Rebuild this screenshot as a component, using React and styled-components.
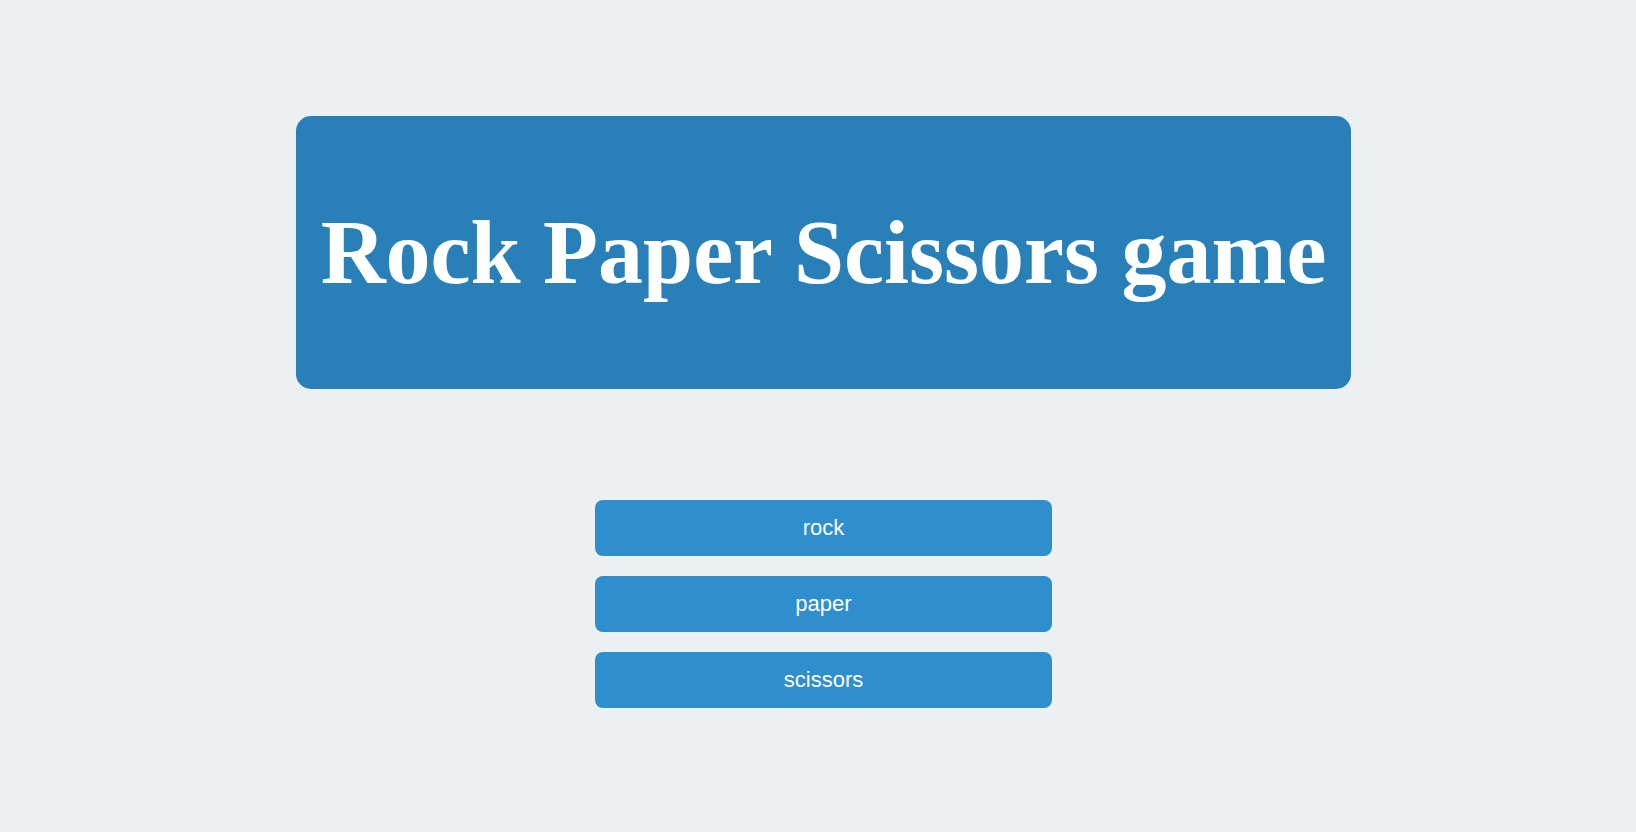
import styled, { createGlobalStyle } from "styled-components";

const GlobalStyle = createGlobalStyle`
body {
    margin: 0;
    background: #ecf0f1;
    font-family: 'Liberation Sans', Arial, sans-serif;
}
`;

const Container = styled.div`
min-height: 100vh;
box-sizing: border-box;
padding-top: 116px;
padding-left: 11px;
display: flex;
flex-direction: column;
align-items: center;
`;

const Topo = styled.div`
width: 1055px;
height: 273px;
background: #2980b9;
border-radius: 15px;
display: flex;
justify-content: center;
align-items: center;

h1 {
    margin: 0;
    font-family: 'Liberation Serif', 'Times New Roman', serif;
    font-weight: 700;
    font-size: 90px;
    color: #FFFFFF;
    white-space: nowrap;
}
`;

const Menu = styled.div`
margin-top: 111px;
display: flex;
flex-direction: column;
gap: 20px;
`;

const Button = styled.button`
width: 457px;
height: 56px;
background: #2e8ece;
border: none;
border-radius: 8px;
color: #FFFFFF;
font-family: 'Liberation Sans', Arial, sans-serif;
font-size: 22px;
cursor: pointer;
padding: 0;
`;

export default function App() {
    const opcoes = ["rock", "paper", "scissors"];

    return (<Container>
        <GlobalStyle />
        <Topo>
            <h1>Rock Paper Scissors game</h1>
        </Topo>
        <Menu>
            {opcoes.map((o) => <Button key={o}>{o}</Button>)}
        </Menu>
    </Container>
    );
}
